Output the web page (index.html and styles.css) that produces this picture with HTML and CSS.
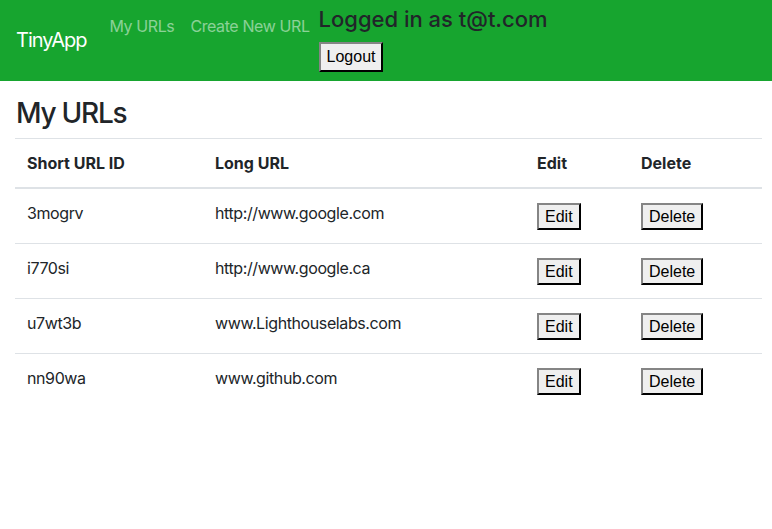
FILE: index.html
```html
<!DOCTYPE html>
<html lang="en">
<head>
<meta charset="utf-8">
<title>TinyApp</title>
<link rel="stylesheet" href="styles.css">
</head>
<body>
<nav class="navbar">
  <a class="brand" href="#">TinyApp</a>
  <ul class="nav">
    <li><a class="nav-link" href="#">My URLs</a></li>
    <li><a class="nav-link" href="#">Create New URL</a></li>
    <li class="user">
      <h4 class="user-name">Logged in as t@t.com</h4>
      <form><button class="btn" type="button">Logout</button></form>
    </li>
  </ul>
</nav>
<main class="content">
  <h3 class="title">My URLs</h3>
  <table class="table">
    <thead>
      <tr>
        <th class="c1">Short URL ID</th>
        <th class="c2">Long URL</th>
        <th class="c3">Edit</th>
        <th class="c4">Delete</th>
      </tr>
    </thead>
    <tbody>
      <tr>
        <td>3mogrv</td>
        <td>http://www.google.com</td>
        <td><form><button class="btn" type="button">Edit</button></form></td>
        <td><form><button class="btn" type="button">Delete</button></form></td>
      </tr>
      <tr>
        <td>i770si</td>
        <td>http://www.google.ca</td>
        <td><form><button class="btn" type="button">Edit</button></form></td>
        <td><form><button class="btn" type="button">Delete</button></form></td>
      </tr>
      <tr>
        <td>u7wt3b</td>
        <td>www.Lighthouselabs.com</td>
        <td><form><button class="btn" type="button">Edit</button></form></td>
        <td><form><button class="btn" type="button">Delete</button></form></td>
      </tr>
      <tr>
        <td>nn90wa</td>
        <td>www.github.com</td>
        <td><form><button class="btn" type="button">Edit</button></form></td>
        <td><form><button class="btn" type="button">Delete</button></form></td>
      </tr>
    </tbody>
  </table>
</main>
</body>
</html>
```
FILE: styles.css
```css
* { box-sizing: border-box; }
html, body { margin: 0; padding: 0; }
body {
  font-family: "Inter", "Liberation Sans", sans-serif;
  font-size: 16px;
  line-height: 1.5;
  color: #212529;
  background: #fff;
}
.navbar {
  display: flex;
  align-items: center;
  background: #17a52f;
  padding: 8px 16px;
  height: 81px;
}
.brand {
  color: #fff;
  text-decoration: none;
  font-size: 20px;
  line-height: 30px;
  letter-spacing: -0.05em;
  margin-right: 15px;
  margin-top: -1px;
}
.nav {
  list-style: none;
  margin: 0;
  padding: 0;
  display: flex;
  align-self: flex-start;
}
.nav-link {
  display: block;
  padding: 6px 8px 0 8px;
  letter-spacing: -0.025em;
  color: rgba(255, 255, 255, 0.5);
  text-decoration: none;
}
.user { padding-left: 1px; }
.user-name {
  margin: -2px 0 10px 0;
  font-size: 22px;
  font-weight: 500;
  line-height: 1.2;
  color: #212529;
}
.user form { margin: 0; }
.btn {
  font-family: "Liberation Sans", Arial, sans-serif;
  font-size: 16px;
  line-height: 19px;
  color: #000;
  background: #efefef;
  border: 2px outset #767676;
  border-color: #858585 #333 #333 #858585;
  padding: 2px 6px;
  margin: 0;
}
.user .btn { padding: 3px 6px 4px 6px; }
.content { padding: 0 10px 0 15px; }
.title {
  margin: 16px 0 7px 1px;
  font-size: 28px;
  font-weight: 500;
  line-height: 1.2;
  letter-spacing: -0.045em;
}
.table {
  width: 100%;
  border-collapse: collapse;
}
.table th, .table td {
  text-align: left;
  vertical-align: top;
  padding: 12px;
  line-height: 24px;
  border-top: 1px solid #dee2e6;
}
.table td { letter-spacing: -0.025em; }
.table th { font-weight: 700; }
.table thead th { border-bottom: 2px solid #dee2e6; }
.c1 { width: 188px; }
.c2 { width: 322px; }
.c3 { width: 104px; }
.table td form { margin: 0; }
.table td .btn { display: block; margin: 2px 0 1px 0; letter-spacing: 0; }
```
